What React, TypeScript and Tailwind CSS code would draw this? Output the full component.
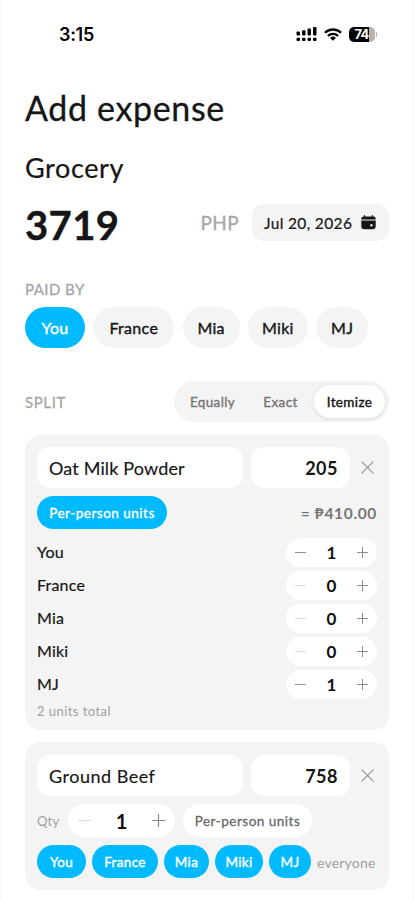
import clsx from "clsx";
import { useState } from "react";

const people = [
  { name: "You", chip: "w-[60px]", small: "w-[49px]" },
  { name: "France", chip: "w-[81px]", small: "w-[66px]" },
  { name: "Mia", chip: "w-[57px]", small: "w-[45px]" },
  { name: "Miki", chip: "w-[60px]", small: "w-[48px]" },
  { name: "MJ", chip: "w-[52px]", small: "w-[42px]" },
];

const modes = [
  { label: "Equally", width: "w-[69px]" },
  { label: "Exact", width: "w-[67px]" },
  { label: "Itemize", width: "w-[71px]" },
];

const StatusBar = () => (
  <div className="flex h-[68px] items-center justify-between pl-[34px] pr-[12px]">
    <span className="pt-px font-['Inter',sans-serif] text-[18px] font-semibold leading-none tracking-[-0.3px] text-black">
      3:15
    </span>
    <div className="flex items-center">
      <svg width="21" height="14" viewBox="0 0 21 14" fill="#000">
        <rect x="0.5" y="4.5" width="3.5" height="4" rx="1" />
        <rect x="6" y="3.2" width="3.5" height="5.3" rx="1" />
        <rect x="11.5" y="1.6" width="3.5" height="6.9" rx="1" />
        <rect x="17" y="0" width="3.5" height="8.5" rx="1" />
        <rect x="0.5" y="10.8" width="3.5" height="3.2" rx="1" />
        <rect x="6" y="10.8" width="3.5" height="3.2" rx="1" />
        <rect x="11.5" y="10.8" width="3.5" height="3.2" rx="1" />
        <rect x="17" y="10.8" width="3.5" height="3.2" rx="1" />
      </svg>
      <svg className="ml-[7px]" width="18" height="13" viewBox="0 0 18 13">
        <g fill="none" stroke="#000" strokeWidth="2.3">
          <path d="M0.9 4.8a11.6 11.6 0 0 1 16.2 0" />
          <path d="M3.9 8a7.3 7.3 0 0 1 10.2 0" />
        </g>
        <path d="M9 12.8 6.1 9.9a4.2 4.2 0 0 1 5.8 0z" fill="#000" />
      </svg>
      <div className="ml-[7px] flex h-[15px] w-[26px] items-center justify-center rounded-[5px] bg-[linear-gradient(90deg,#000_76%,#b3b3b3_76%)] font-['Inter',sans-serif] text-[13px] font-bold leading-none tracking-[-0.7px] text-white">
        74
      </div>
      <div className="ml-px h-[5px] w-[1.5px] rounded-r-full bg-[#b3b3b3]" />
    </div>
  </div>
);

const CalendarIcon = () => (
  <svg width="15" height="15" viewBox="0 0 15 15" fill="#161616">
    <path d="M0.3 4.4V4a2.6 2.6 0 0 1 2.6-2.6V.7a.6.6 0 0 1 1.3 0v.7h6.6V.7a.6.6 0 0 1 1.3 0v.7A2.6 2.6 0 0 1 14.7 4v.4z" />
    <path
      fillRule="evenodd"
      d="M.3 5.6h14.4v5.6a3 3 0 0 1-3 3H3.3a3 3 0 0 1-3-3zM10.4 9.1a1.2 1.2 0 1 0 0 2.4 1.2 1.2 0 0 0 0-2.4z"
    />
  </svg>
);

type StepperProps = {
  value: number;
  large?: boolean;
  dim?: boolean;
};

const Stepper = ({ value, large, dim }: StepperProps) => (
  <div
    className={clsx(
      "flex items-center justify-between rounded-full bg-white",
      large ? "h-[33px] w-[107px] px-[10px]" : "h-[29px] w-[91px] px-[9px]"
    )}
  >
    <svg width={large ? 13 : 11} height="13" viewBox="0 0 12 12">
      <path d="M0 6h12" stroke={dim ? "#dadada" : "#8a8a8a"} />
    </svg>
    <span
      className={clsx(
        "font-bold leading-none text-[#111]",
        large ? "text-[20px]" : "text-[17px]"
      )}
    >
      {value}
    </span>
    <svg width={large ? 13 : 11} height="13" viewBox="0 0 12 12">
      <path d="M0 6h12M6 0v12" stroke="#858585" />
    </svg>
  </div>
);

type ItemHeaderProps = {
  name: string;
  amount: string;
  nameClass: string;
};

const ItemHeader = ({ name, amount, nameClass }: ItemHeaderProps) => (
  <div className="flex h-[41px] items-center">
    <div
      className={clsx(
        "flex h-full w-[206px] items-center rounded-[13px] bg-white px-[12px] pt-[2px] text-[18px] [-webkit-text-stroke:0.15px]",
        nameClass
      )}
    >
      {name}
    </div>
    <div className="ml-[8px] flex h-full w-[99px] items-center justify-end rounded-[13px] bg-white pr-[12px] pt-[2px] text-[18px] font-bold tracking-[0.5px]">
      {amount}
    </div>
    <svg className="ml-[11px]" width="13" height="13" viewBox="0 0 13 13">
      <path d="M.6.6l11.8 11.8M12.4.6.6 12.4" stroke="#959595" strokeWidth="1.2" />
    </svg>
  </div>
);

const App = () => {
  const [payer, setPayer] = useState("You");
  const [mode, setMode] = useState("Itemize");
  const units = [1, 0, 0, 0, 1];

  return (
    <div className="h-[900px] w-full overflow-hidden border-x border-[#f8f8f8] bg-white px-[24px] font-['Lato',sans-serif] text-[#161616]">
      <StatusBar />
      <h1 className="mt-[19px] h-[42px] whitespace-nowrap text-[34px] leading-[42px] tracking-[0.65px] [-webkit-text-stroke:0.3px]">
        Add expense
      </h1>
      <div className="mt-[21px] h-[36px] text-[27px] leading-[36px] tracking-[0.6px] [-webkit-text-stroke:0.2px]">
        Grocery
      </div>

      <div className="mt-[18px] flex h-[37px] items-center">
        <span className="pt-[4px] text-[40px] font-bold leading-none tracking-[0.4px] [-webkit-text-stroke:0.4px]">
          3719
        </span>
        <span className="ml-auto mr-[13px] pt-[2px] text-[19px] tracking-[0.4px] text-[#a6a6a6] [-webkit-text-stroke:0.3px]">
          PHP
        </span>
        <div className="flex h-full w-[137px] items-center justify-between rounded-[12px] bg-[#f4f4f4] pl-[12px] pr-[13px]">
          <span className="whitespace-nowrap pt-[2px] text-[15.5px] tracking-[0.35px] [-webkit-text-stroke:0.2px]">
            Jul 20, 2026
          </span>
          <CalendarIcon />
        </div>
      </div>

      <div className="mt-[37px] h-[20px] text-[15px] leading-[22px] tracking-[0.45px] text-[#a6a6a6] [-webkit-text-stroke:0.3px]">
        PAID BY
      </div>
      <div className="mt-[9px] flex gap-[8.3px]">
        {people.map(({ name, chip }) => (
          <button
            key={name}
            className={clsx(
              "flex h-[41px] items-center justify-center rounded-full pt-px text-[16px] tracking-[0.3px] [-webkit-text-stroke:0.4px]",
              chip,
              payer === name ? "bg-[#00baff] text-white" : "bg-[#f4f4f4]"
            )}
            onClick={() => setPayer(name)}
          >
            {name}
          </button>
        ))}
      </div>

      <div className="mt-[33px] flex h-[41px] items-center justify-between">
        <span className="pt-[2px] text-[15px] tracking-[0.6px] text-[#a6a6a6] [-webkit-text-stroke:0.3px]">
          SPLIT
        </span>
        <div className="flex h-full items-center rounded-full bg-[#f4f4f4] p-[4px]">
          {modes.map(({ label, width }) => (
            <button
              key={label}
              className={clsx(
                "flex h-[33px] items-center justify-center rounded-full pt-[2px] text-[13.5px] tracking-[0.35px] [-webkit-text-stroke:0.4px]",
                width,
                mode === label
                  ? "bg-white shadow-[0_1px_4px_rgba(0,0,0,0.1)]"
                  : "text-[#777]"
              )}
              onClick={() => setMode(label)}
            >
              {label}
            </button>
          ))}
        </div>
      </div>

      <div className="mt-[13px] h-[295px] rounded-[16px] bg-[#f4f4f4] p-[12px]">
        <ItemHeader name="Oat Milk Powder" amount="205" nameClass="tracking-[0.15px]" />
        <div className="mt-[8px] flex h-[33px] items-center justify-between">
          <div className="flex h-full w-[130px] items-center justify-center rounded-full bg-[#00baff] pt-[2px] text-[13.5px] tracking-[0.5px] text-white [-webkit-text-stroke:0.35px]">
            Per-person units
          </div>
          <span className="pt-[2px] text-[15.5px] font-bold tracking-[0.65px] text-[#777]">
            = ₱410.00
          </span>
        </div>
        <div className="mt-[9px] flex flex-col gap-[4px]">
          {people.map(({ name }, i) => (
            <div key={name} className="flex h-[29px] items-center justify-between">
              <span className="pb-px text-[16px] tracking-[0.2px] [-webkit-text-stroke:0.2px]">
                {name}
              </span>
              <Stepper value={units[i]} dim={units[i] === 0} />
            </div>
          ))}
        </div>
        <div className="mt-[2px] text-[13px] leading-[20px] tracking-[0.45px] text-[#a0a0a0]">
          2 units total
        </div>
      </div>

      <div className="mt-[12px] h-[148px] rounded-[16px] bg-[#f4f4f4] px-[12px] pt-[13px]">
        <ItemHeader name="Ground Beef" amount="758" nameClass="tracking-[0.5px]" />
        <div className="mt-[8px] flex h-[33px] items-center">
          <span className="w-[31px] pt-[2px] text-[13px] tracking-[0.2px] text-[#a0a0a0]">
            Qty
          </span>
          <Stepper value={1} large dim />
          <div className="ml-[8px] flex h-full w-[129px] items-center justify-center rounded-full bg-white pt-[2px] text-[13.5px] tracking-[0.5px] text-[#686868] [-webkit-text-stroke:0.3px]">
            Per-person units
          </div>
        </div>
        <div className="mt-[8px] flex h-[33px] items-center gap-[6px]">
          {people.map(({ name, small }) => (
            <div
              key={name}
              className={clsx(
                "flex h-full items-center justify-center rounded-full bg-[#00baff] pt-[2px] text-[13.5px] tracking-[0.35px] text-white [-webkit-text-stroke:0.4px]",
                small
              )}
            >
              {name}
            </div>
          ))}
          <span className="pt-[2px] text-[14px] tracking-[0.2px] text-[#a0a0a0]">
            everyone
          </span>
        </div>
      </div>
    </div>
  );
};

export default App;
